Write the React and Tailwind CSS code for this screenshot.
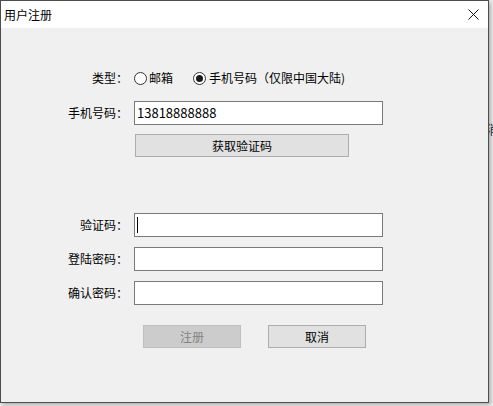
import React from 'react';

const font = { fontFamily: '"Noto Sans CJK SC", "Noto Sans", sans-serif' };

function Label({ children }) {
  return <div className="w-[127px] shrink-0 text-right leading-[16px]">{children}</div>;
}

function Input({ value, caret }) {
  return (
    <div className="relative ml-[6px] flex h-[24px] w-[249px] items-center border border-[#7a7a7a] bg-white pl-[2px] text-[13px] leading-[16px]">
      {value}
      {caret && <span className="absolute left-[2px] top-[3px] h-[16px] w-px bg-black" />}
    </div>
  );
}

function Radio({ checked }) {
  return (
    <span className="flex h-[13px] w-[13px] items-center justify-center rounded-full border border-[#333] bg-white">
      {checked && <span className="h-[7px] w-[7px] rounded-full bg-[#1a1a1a]" />}
    </span>
  );
}

export default function App() {
  return (
    <div className="relative h-[406px] w-[493px] overflow-hidden bg-[#f0f0f0] text-[12px] text-black" style={font}>
      <span className="absolute left-[486px] top-[121px] text-[13px] leading-[16px] text-[#333]">消</span>
      <div className="relative flex h-[403px] w-[489px] flex-col border border-[#4d4d4d] bg-[#f0f0f0] shadow-[2px_2px_4px_rgba(0,0,0,0.28)]">
        {/* title bar */}
        <div className="flex h-[27px] items-center justify-between bg-white pl-[3px] pr-[9px]">
          <span className="text-[12px] leading-[16px]">用户注册</span>
          <svg width="11" height="11" viewBox="0 0 11 11" className="mb-[1px]">
            <path d="M0.5 0.5 L10.5 10.5 M10.5 0.5 L0.5 10.5" stroke="#111" strokeWidth="1" fill="none" />
          </svg>
        </div>

        <div className="flex flex-col">
          <div className="mt-[42px] flex items-center">
            <Label>类型：</Label>
            <div className="ml-[6px] flex items-center leading-[16px]">
              <Radio />
              <span className="ml-[2px]">邮箱</span>
              <span className="ml-[20px]"><Radio checked /></span>
              <span className="ml-[3px]">手机号码（仅限中国大陆)</span>
            </div>
          </div>

          <div className="mt-[15px] flex items-center">
            <Label>手机号码：</Label>
            <Input value="13818888888" />
          </div>

          <div className="ml-[134px] mt-[9px] flex h-[23px] w-[214px] items-center justify-center border border-[#adadad] bg-[#e1e1e1]">
            获取验证码
          </div>

          <div className="mt-[56px] flex items-center">
            <Label>验证码：</Label>
            <Input caret />
          </div>
          <div className="mt-[10px] flex items-center">
            <Label>登陆密码：</Label>
            <Input />
          </div>
          <div className="mt-[10px] flex items-center">
            <Label>确认密码：</Label>
            <Input />
          </div>

          <div className="ml-[142px] mt-[20px] flex gap-[27px]">
            <div className="flex h-[23px] w-[98px] items-center justify-center border border-[#bfbfbf] bg-[#cccccc] text-[#838383]">
              注册
            </div>
            <div className="flex h-[23px] w-[98px] items-center justify-center border border-[#adadad] bg-[#e1e1e1]">
              取消
            </div>
          </div>
        </div>
      </div>
    </div>
  );
}
